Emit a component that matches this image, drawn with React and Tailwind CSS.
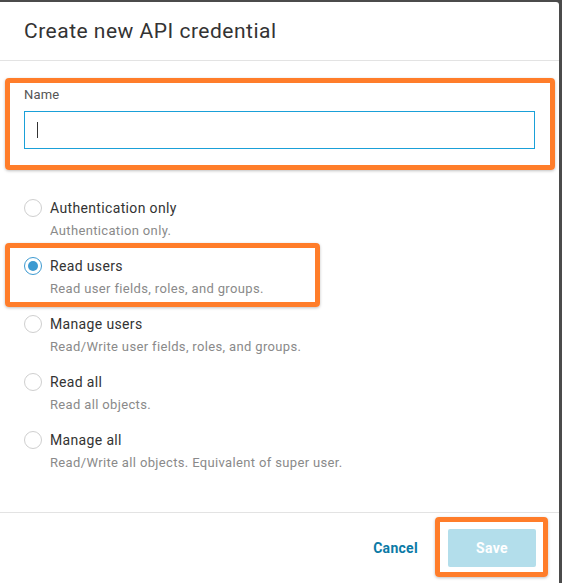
import React, { useState } from 'react';

const options = [
  { id: 'auth', label: 'Authentication only', description: 'Authentication only.' },
  { id: 'read-users', label: 'Read users', description: 'Read user fields, roles, and groups.' },
  { id: 'manage-users', label: 'Manage users', description: 'Read/Write user fields, roles, and groups.' },
  { id: 'read-all', label: 'Read all', description: 'Read all objects.' },
  { id: 'manage-all', label: 'Manage all', description: 'Read/Write all objects. Equivalent of super user.' }
];

function Highlight({ className }) {
  return (
    <span
      className={`pointer-events-none absolute rounded-[4px] border-[5px] border-[#ff7d2a] shadow-[0_1px_3px_rgba(0,0,0,0.25)] ${className}`}
    />
  );
}

function Radio({ checked }) {
  return (
    <span
      className={`mt-[1px] flex h-[18px] w-[18px] shrink-0 items-center justify-center rounded-full border bg-white ${
        checked ? 'border-[#3d9ad1]' : 'border-[#cfcfcf]'
      }`}
    >
      {checked && <span className="h-[10px] w-[10px] rounded-full bg-[#3d9ad1]" />}
    </span>
  );
}

export default function App() {
  const [selected, setSelected] = useState('read-users');

  return (
    <div className="h-[583px] w-[562px] overflow-hidden bg-[#4b4b4b] pt-[2px] pr-[3px] font-['Roboto','Liberation_Sans',sans-serif]">
      <div className="flex h-[581px] flex-col rounded-tr-[3px] bg-white">
        <header className="flex h-[59px] shrink-0 items-center border-b border-[#e3e3e3] px-6 pt-[2px]">
          <h1 className="text-[21px] font-normal tracking-[0.5px] text-[#333]">Create new API credential</h1>
        </header>

        <div className="flex-1 px-6 pt-[26px]">
          <div className="relative">
            <Highlight className="-top-[9px] -left-[19px] -right-[20px] -bottom-[21px]" />
            <label className="block text-[13px] leading-[16px] tracking-[0.2px] text-[#555]">Name</label>
            <div className="mt-[8px] flex h-[38px] items-center border border-[#1aa0d8] bg-white pl-[12px]">
              <span className="h-[16px] w-px bg-[#333]" />
            </div>
          </div>

          <div className="mt-[49px] flex flex-col gap-[15px]">
            {options.map((option) => (
              <div
                key={option.id}
                onClick={() => setSelected(option.id)}
                className="relative flex cursor-pointer gap-[8px]"
              >
                {option.id === 'read-users' && (
                  <Highlight className="-top-[13px] -left-[19px] -bottom-[8px] w-[315px]" />
                )}
                <Radio checked={selected === option.id} />
                <div>
                  <p className="text-[14px] leading-[20px] tracking-[0.35px] text-[#333]">{option.label}</p>
                  <p className="mt-[3px] text-[13px] leading-[20px] tracking-[0.35px] text-[#8a8a8a]">
                    {option.description}
                  </p>
                </div>
              </div>
            ))}
          </div>
        </div>

        <footer className="flex h-[71px] shrink-0 items-center justify-end gap-[30px] border-t border-[#e3e3e3] pr-[23px]">
          <button type="button" className="text-[14px] font-bold tracking-[0.3px] text-[#0b7aa6]">
            Cancel
          </button>
          <div className="relative">
            <Highlight className="-top-[12px] -left-[13px] -right-[12px] -bottom-[10px]" />
            <button
              type="button"
              className="h-[38px] w-[88px] rounded-[2px] bg-[#b3deeb] text-[14px] font-bold tracking-[0.3px] text-white"
            >
              Save
            </button>
          </div>
        </footer>
      </div>
    </div>
  );
}
